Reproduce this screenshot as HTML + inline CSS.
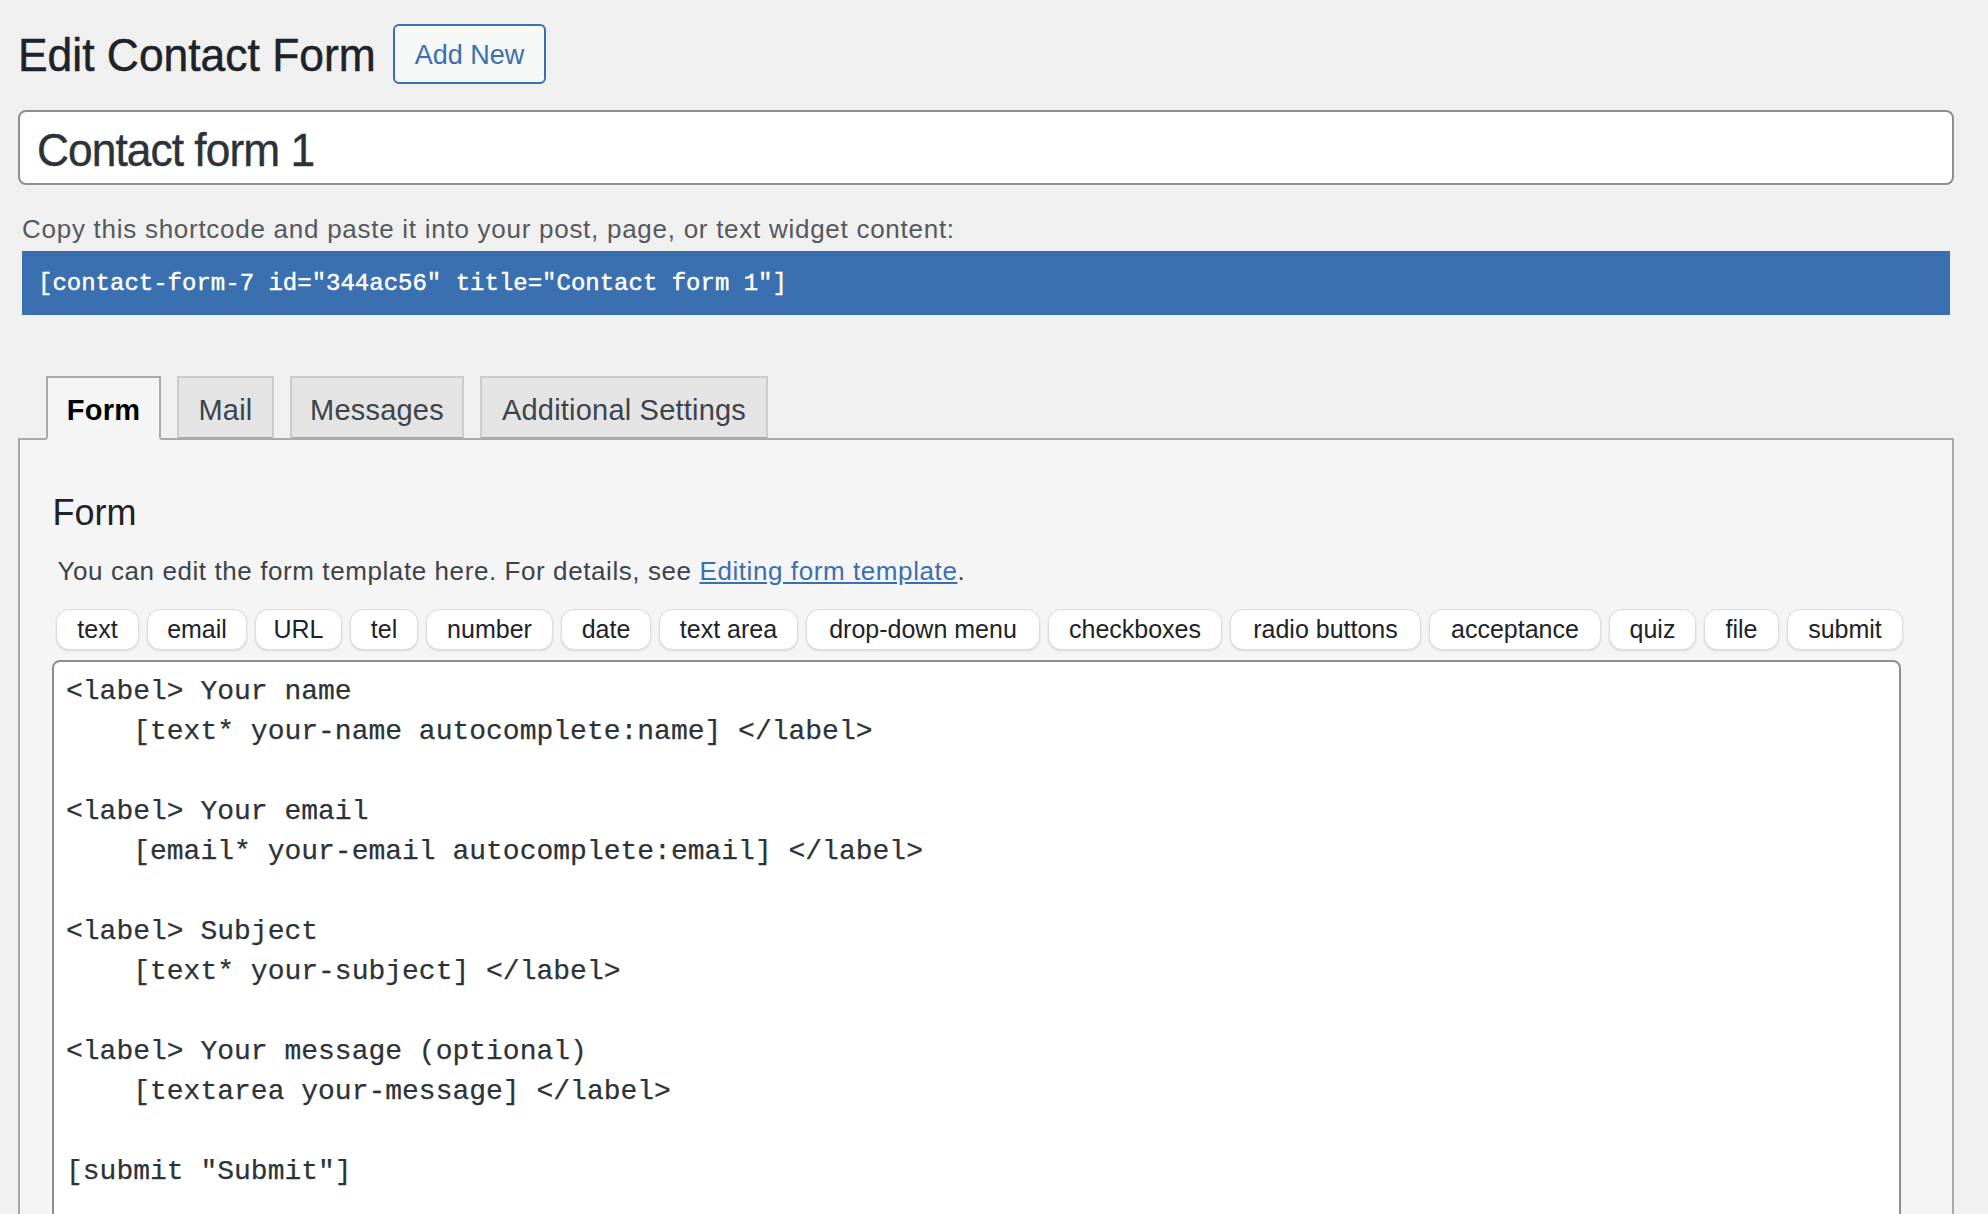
<!DOCTYPE html>
<html><head><meta charset="utf-8">
<style>
*{box-sizing:border-box;margin:0;padding:0}
html,body{width:1988px;height:1214px;overflow:hidden;background:#f0f0f1;font-family:"Liberation Sans",sans-serif;color:#3c434a}
.abs{position:absolute}
h1{position:absolute;left:17.5px;top:27px;font-size:46px;font-weight:400;color:#1d2327;line-height:56px;white-space:nowrap;transform-origin:0 0;transform:scaleX(0.965);-webkit-text-stroke:0.5px #1d2327}
.addnew{position:absolute;left:393px;top:24px;width:153px;height:60px;border:2px solid #3a6fb0;border-radius:6px;background:#f6f7f7;color:#3a6fb0;font-size:27px;line-height:56px;padding-top:1px;text-align:center}
.title{position:absolute;left:18px;top:110px;width:1936px;height:75px;border:2px solid #8c8f94;border-radius:8px;background:#fff;color:#2c3338;font-size:47px;line-height:71px;padding-left:17px;padding-top:2px;letter-spacing:-1px}
.title span{display:inline-block;transform-origin:0 0;transform:scaleX(0.942);-webkit-text-stroke:0.4px #2c3338}
.copy{position:absolute;left:22px;top:211px;font-size:26px;line-height:36px;color:#55595d;white-space:nowrap;letter-spacing:0.73px}
.sc{position:absolute;left:22px;top:251px;width:1928px;height:64px;background:#3a6fb0;color:#fff;font-family:"Liberation Mono",monospace;font-size:24px;line-height:64px;padding-left:16px;padding-top:1px;white-space:pre;-webkit-text-stroke:0.45px #fff}
.tab{position:absolute;top:376px;height:63px;background:#e4e4e4;border:2px solid #ccc;border-bottom:2px solid #aaa;font-size:29px;line-height:60px;padding-top:2px;letter-spacing:0.2px;text-align:center;color:#3c434a;white-space:nowrap}
.tab.active{background:#f5f5f5;border-color:#aaa;border-bottom-color:#f5f5f5;color:#000;font-weight:700;height:64px;z-index:2}
.panel{position:absolute;left:18px;top:438px;width:1936px;height:900px;background:#f5f5f5;border:2px solid #aaa}
h2{position:absolute;left:52.5px;top:490px;font-size:36px;font-weight:400;color:#1d2327;line-height:46px}
.desc{position:absolute;left:57.5px;top:552px;font-size:26px;line-height:38px;color:#3c434a;white-space:nowrap;letter-spacing:0.585px}
.desc a{color:#3a6fb0;text-decoration:underline}
.tag{position:absolute;top:609px;height:41px;background:#fff;border:1px solid #dcdcde;border-radius:13px;font-size:25px;line-height:38px;text-align:center;color:#1d2327;white-space:nowrap;box-shadow:0 1px 2px rgba(0,0,0,.12)}
.ta{position:absolute;left:52px;top:660px;width:1849px;height:700px;background:#fff;border:2px solid #8c8f94;border-radius:8px;font-family:"Liberation Mono",monospace;font-size:28px;line-height:40px;color:#2c3338;padding:10px 0 0 12px;white-space:pre;-webkit-text-stroke:0.25px #2c3338}
</style></head><body>
<h1>Edit Contact Form</h1>
<div class="addnew">Add New</div>
<div class="title"><span>Contact form 1</span></div>
<div class="copy">Copy this shortcode and paste it into your post, page, or text widget content:</div>
<div class="sc">[contact-form-7 id="344ac56" title="Contact form 1"]</div>

<div class="panel"></div>
<div class="tab active" style="left:46px;width:115px">Form</div>
<div class="tab" style="left:177px;width:97px">Mail</div>
<div class="tab" style="left:290px;width:174px">Messages</div>
<div class="tab" style="left:480px;width:288px">Additional Settings</div>

<h2>Form</h2>
<div class="desc">You can edit the form template here. For details, see <a>Editing form template</a>.</div>

<div class="tag" style="left:56px;width:83px">text</div>
<div class="tag" style="left:147px;width:100px">email</div>
<div class="tag" style="left:255px;width:87px">URL</div>
<div class="tag" style="left:350px;width:68px">tel</div>
<div class="tag" style="left:426px;width:127px">number</div>
<div class="tag" style="left:561px;width:90px">date</div>
<div class="tag" style="left:659px;width:139px">text area</div>
<div class="tag" style="left:806px;width:234px">drop-down menu</div>
<div class="tag" style="left:1048px;width:174px">checkboxes</div>
<div class="tag" style="left:1230px;width:191px">radio buttons</div>
<div class="tag" style="left:1429px;width:172px">acceptance</div>
<div class="tag" style="left:1609px;width:87px">quiz</div>
<div class="tag" style="left:1704px;width:75px">file</div>
<div class="tag" style="left:1787px;width:116px">submit</div>

<div class="ta">&lt;label&gt; Your name
    [text* your-name autocomplete:name] &lt;/label&gt;

&lt;label&gt; Your email
    [email* your-email autocomplete:email] &lt;/label&gt;

&lt;label&gt; Subject
    [text* your-subject] &lt;/label&gt;

&lt;label&gt; Your message (optional)
    [textarea your-message] &lt;/label&gt;

[submit "Submit"]</div>
</body></html>
